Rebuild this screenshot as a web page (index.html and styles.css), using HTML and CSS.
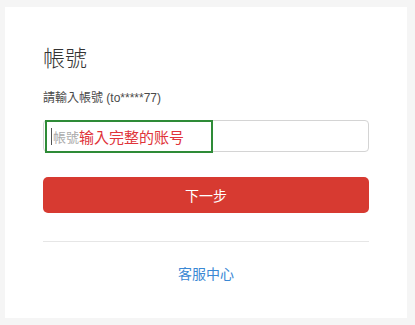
FILE: index.html
```html
<!DOCTYPE html>
<html lang="zh-Hant">
<head>
  <meta charset="UTF-8">
  <meta name="viewport" content="width=device-width, initial-scale=1.0">
  <title>帳號</title>
  <link rel="stylesheet" href="styles.css">
</head>
<body>
  <div class="card">
    <h2 class="title">帳號</h2>
    <div class="label">請輸入帳號 (to*****77)</div>

    <div class="field">
      <div class="input">
        <span class="caret"></span>
        <span class="placeholder">帳號</span>
      </div>
      <div class="mark">
        <span class="caret"></span>
        <span class="placeholder">帳號</span><span class="note">输入完整的账号</span>
      </div>
    </div>

    <button class="button">下一步</button>

    <div class="divider"></div>

    <a class="link" href="#">客服中心</a>
  </div>
</body>
</html>
```

FILE: styles.css
```css
body {
  margin: 0;
  padding: 7px 8px 7px 5px;
  background-color: #f5f5f5;
  font-family: "Liberation Sans", Arial, "Noto Sans CJK TC", sans-serif;
}

.card {
  width: 402px;
  height: 311px;
  box-sizing: border-box;
  padding: 39px 38px 0 38px;
  background-color: #fff;
  display: flex;
  flex-direction: column;
}

.title {
  margin: 0;
  font-size: 22px;
  line-height: 26px;
  font-weight: 300;
  color: #333;
}

.label {
  margin-top: 18px;
  font-size: 12px;
  line-height: 16px;
  color: #4a4a4a;
}

.field {
  position: relative;
  margin-top: 14px;
}

.input {
  height: 32px;
  box-sizing: border-box;
  border: 1px solid #d4d4d4;
  border-radius: 4px;
  display: flex;
  align-items: center;
  padding-left: 7px;
}

.caret {
  display: inline-block;
  width: 1px;
  height: 17px;
  background-color: #555;
  margin-right: 1px;
}

.placeholder {
  font-size: 13px;
  color: #aaa;
}

.mark {
  position: absolute;
  top: 0;
  left: 2px;
  width: 168px;
  height: 33px;
  box-sizing: border-box;
  border: 2px solid #2e8b37;
  display: flex;
  align-items: center;
  padding-left: 4px;
  background-color: #fff;
}

.note {
  font-size: 15px;
  color: #e0343a;
}

.button {
  margin-top: 25px;
  height: 36px;
  border: none;
  border-radius: 5px;
  background-color: #d73a31;
  color: #fff;
  font-family: inherit;
  font-size: 14px;
}

.divider {
  margin-top: 28px;
  height: 1px;
  background-color: #e6e6e6;
}

.link {
  margin-top: 22px;
  text-align: center;
  font-size: 14px;
  line-height: 20px;
  color: #3a88d4;
  text-decoration: none;
}
```
